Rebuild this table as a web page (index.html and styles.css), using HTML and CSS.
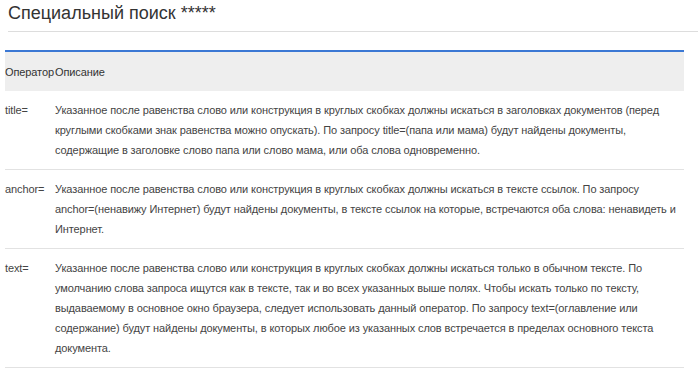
FILE: index.html
```html
<!DOCTYPE html>
<html lang="ru">

<head>
    <meta charset="UTF-8">
    <title>Специальный поиск</title>
    <link rel="stylesheet" href="styles.css">
</head>

<body>
    <!-- Page title -->
    <h2 class="page-title">Специальный поиск *****</h2>

    <!-- Operators table -->
    <table class="ops-table">
        <thead>
            <tr>
                <th class="op-col">Оператор</th>
                <th>Описание</th>
            </tr>
        </thead>
        <tbody>
            <tr>
                <td class="op-col">title=</td>
                <td>Указанное после равенства слово или конструкция в круглых скобках должны искаться в заголовках документов (перед круглыми скобками знак равенства можно опускать). По запросу <span class="query">title=(папа</span> или мама) будут найдены документы, содержащие в заголовке слово папа или слово мама, или оба слова одновременно.</td>
            </tr>
            <tr>
                <td class="op-col">anchor=</td>
                <td>Указанное после равенства слово или конструкция в круглых скобках должны искаться в тексте ссылок. По запросу <span class="query">anchor=(ненавижу</span> Интернет) будут найдены документы, в тексте ссылок на которые, встречаются оба слова: ненавидеть и Интернет.</td>
            </tr>
            <tr>
                <td class="op-col">text=</td>
                <td>Указанное после равенства слово или конструкция в круглых скобках должны искаться только в обычном тексте. По умолчанию слова запроса ищутся как в тексте, так и во всех указанных выше полях. Чтобы искать только по тексту, выдаваемому в основное окно браузера, следует использовать данный оператор. По запросу <span class="query">text=(оглавление</span> или содержание) будут найдены документы, в которых любое из указанных слов встречается в пределах основного текста документа.</td>
            </tr>
        </tbody>
    </table>
</body>

</html>
```

FILE: styles.css
```css
/* General Styles */
body {
    font-family: 'Liberation Sans', Arial, sans-serif;
    margin: 0;
    padding: 0;
    background-color: #fff;
    color: #444;
}

/* Title */
.page-title {
    margin: 0 0 18px 8px;
    padding: 2px 0 7px;
    font-size: 18px;
    font-weight: normal;
    line-height: 22px;
    color: #333;
    border-bottom: 1px solid #ddd;
}

/* Table */
.ops-table {
    margin-left: 5px;
    width: 679px;
    table-layout: fixed;
    border-collapse: collapse;
    border-top: 2px solid #3b78d4;
    font-size: 11px;
    letter-spacing: -0.1px;
    line-height: 20px;
}

.ops-table th,
.ops-table td {
    padding: 9px 4px 9px 0;
    text-align: left;
    vertical-align: top;
    font-weight: normal;
}

.ops-table th {
    background-color: #eee;
    padding: 10px 0 9px;
    color: #333;
}

.ops-table td {
    border-bottom: 1px solid #e2e2e2;
}

.ops-table .op-col {
    width: 50px;
    padding-right: 0;
}

/* operator examples never split after "=" */
.query {
    white-space: nowrap;
}
```
